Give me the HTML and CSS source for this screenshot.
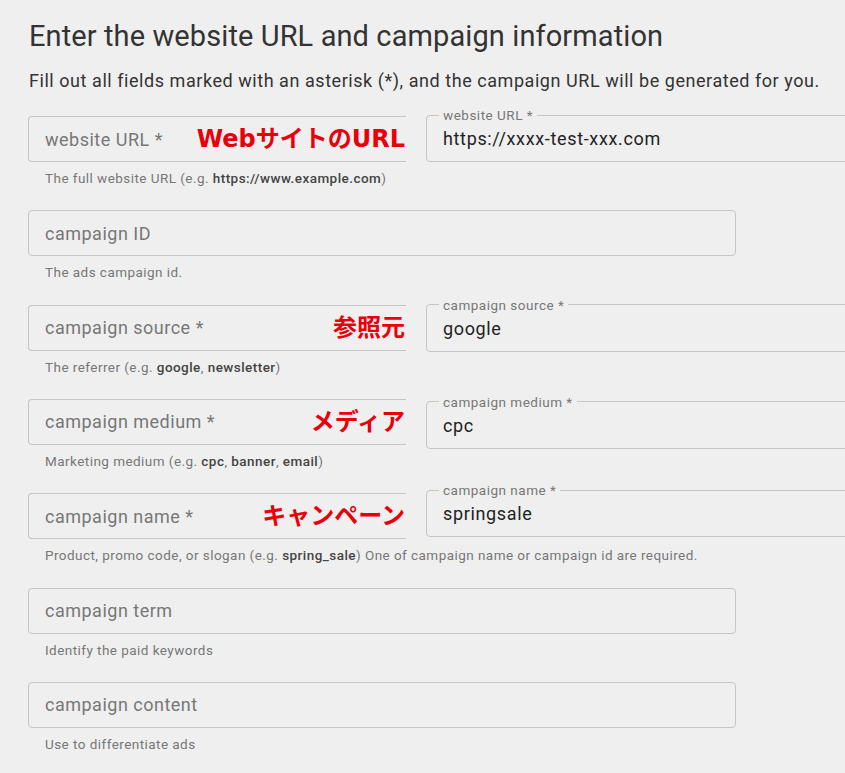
FILE: index.html
```html
<!DOCTYPE html>
<html lang="ja">
<head>
  <meta charset="UTF-8" />
  <meta name="viewport" content="width=device-width, initial-scale=1.0" />
  <title>Campaign URL Builder</title>
  <link rel="stylesheet" href="styles.css">
</head>
<body>
  <h1>Enter the website URL and campaign information</h1>
  <p class="lead">Fill out all fields marked with an asterisk (*), and the campaign URL will be generated for you.</p>

  <!-- website URL -->
  <div class="field">
    <div class="line">
      <div class="box cut"><span class="ph">website URL *</span><span class="note">WebサイトのURL</span></div>
      <fieldset class="filled nudge-url"><legend>website URL *</legend><div class="value">https://xxxx-test-xxx.com</div></fieldset>
    </div>
    <p class="hint">The full website URL (e.g. <b>https://www.example.com</b>)</p>
  </div>

  <!-- campaign ID -->
  <div class="field">
    <div class="line">
      <div class="box"><span class="ph">campaign ID</span></div>
    </div>
    <p class="hint">The ads campaign id.</p>
  </div>

  <!-- campaign source -->
  <div class="field">
    <div class="line">
      <div class="box cut"><span class="ph">campaign source *</span><span class="note">参照元</span></div>
      <fieldset class="filled nudge-source"><legend>campaign source *</legend><div class="value">google</div></fieldset>
    </div>
    <p class="hint">The referrer (e.g. <b>google</b>, <b>newsletter</b>)</p>
  </div>

  <!-- campaign medium -->
  <div class="field">
    <div class="line">
      <div class="box cut"><span class="ph">campaign medium *</span><span class="note">メディア</span></div>
      <fieldset class="filled nudge-medium"><legend>campaign medium *</legend><div class="value">cpc</div></fieldset>
    </div>
    <p class="hint">Marketing medium (e.g. <b>cpc</b>, <b>banner</b>, <b>email</b>)</p>
  </div>

  <!-- campaign name -->
  <div class="field">
    <div class="line">
      <div class="box cut"><span class="ph">campaign name *</span><span class="note">キャンペーン</span></div>
      <fieldset class="filled nudge-name"><legend>campaign name *</legend><div class="value">springsale</div></fieldset>
    </div>
    <p class="hint">Product, promo code, or slogan (e.g. <b>spring_sale</b>) One of campaign name or campaign id are required.</p>
  </div>

  <!-- campaign term -->
  <div class="field">
    <div class="line">
      <div class="box"><span class="ph">campaign term</span></div>
    </div>
    <p class="hint">Identify the paid keywords</p>
  </div>

  <!-- campaign content -->
  <div class="field">
    <div class="line">
      <div class="box"><span class="ph">campaign content</span></div>
    </div>
    <p class="hint">Use to differentiate ads</p>
  </div>
</body>
</html>
```

FILE: styles.css
```css
* { box-sizing: border-box; margin: 0; padding: 0; }
html, body { overflow: hidden; }
body { background-color: #efefef; font-family: Roboto, "Noto Sans", sans-serif; color: #333; padding: 19px 0 0 28px; width: 845px; }
h1 { font-size: 29px; font-weight: 400; line-height: 34px; letter-spacing: 0.1px; color: #333; margin-left: 1px; }
.lead { font-size: 18px; line-height: 24px; letter-spacing: 0.55px; color: #333; margin: 16px 0 23px 1px; }

.field { margin-bottom: 24.33px; }
.line { display: flex; gap: 20px; height: 46px; }
.box { width: 708px; height: 46px; border: 1px solid #c6c6c6; border-radius: 4px; padding: 0 16px; display: flex; align-items: center; justify-content: space-between; flex: none; }
.box.cut { width: 378px; border-right: none; border-radius: 4px 0 0 4px; padding-right: 1px; }
.ph { font-size: 18px; letter-spacing: 0.5px; color: #777; }
.note { font-family: "DejaVu Sans", "Noto Sans CJK JP", sans-serif; font-size: 24px; font-weight: 700; color: #e8000b; line-height: 1; }

/* filled copies of the fields, pasted next to the empty ones */
.filled { flex: none; width: 480px; height: 54px; border: 1px solid #c4c4c4; border-radius: 4px; padding: 0 16px; }
.filled legend { font-size: 13.5px; line-height: 14px; letter-spacing: 0.5px; color: #777; padding: 0 4px; margin-left: -4px; }
.filled .value { font-size: 18px; line-height: 24px; letter-spacing: 0.65px; padding-top: 5px; color: #222; }
.nudge-url { margin-top: -8px; }
.nudge-source { margin-top: -7px; }
.nudge-medium { margin-top: -4px; }
.nudge-name { margin-top: -10px; }

.hint { font-size: 13.5px; line-height: 16px; letter-spacing: 0.45px; color: #777; margin: 8px 0 0 17px; }
.hint b { font-weight: 500; color: #444; }
```
